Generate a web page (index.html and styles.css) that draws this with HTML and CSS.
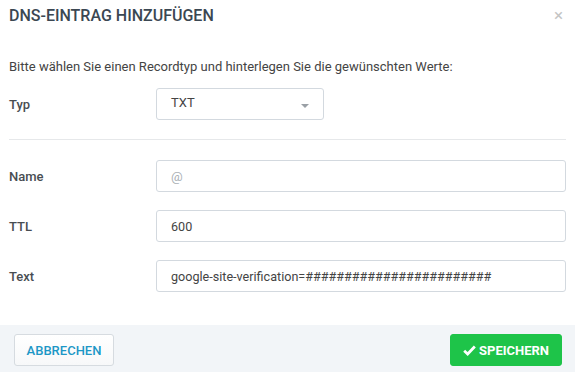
FILE: index.html
```html
<!DOCTYPE html>
<html lang="de">
<head>
<meta charset="utf-8">
<link rel="stylesheet" href="styles.css">
</head>
<body>
<div class="modal">
  <div class="modal-header">
    <h1 class="title">DNS-Eintrag hinzufügen</h1>
    <span class="close">&times;</span>
  </div>
  <div class="modal-body">
    <p class="intro">Bitte wählen Sie einen Recordtyp und hinterlegen Sie die gewünschten Werte:</p>
    <div class="row row-typ">
      <label class="label">Typ</label>
      <div class="select">
        <span>TXT</span>
        <span class="caret"></span>
      </div>
    </div>
    <hr class="divider">
    <div class="row">
      <label class="label">Name</label>
      <div class="input placeholder">@</div>
    </div>
    <div class="row">
      <label class="label">TTL</label>
      <div class="input">600</div>
    </div>
    <div class="row">
      <label class="label">Text</label>
      <div class="input">google-site-verification=########################</div>
    </div>
  </div>
  <div class="modal-footer">
    <button class="btn btn-cancel">Abbrechen</button>
    <button class="btn btn-save"><svg class="check" viewBox="0 0 14 12" width="13" height="11"><path d="M1.2 6.2 L5 9.8 L12.8 1.6" fill="none" stroke="#fff" stroke-width="3" stroke-linejoin="miter"/></svg>Speichern</button>
  </div>
</div>
</body>
</html>
```

FILE: styles.css
```css
* { box-sizing: border-box; }
html, body { margin: 0; padding: 0; background: #fff; }
body {
  font-family: Roboto, "Liberation Sans", Arial, sans-serif;
  font-size: 13px;
  color: #333;
  width: 575px;
  height: 372px;
  overflow: hidden;
}
.modal { width: 575px; height: 372px; display: flex; flex-direction: column; }
.modal-header {
  display: flex;
  justify-content: space-between;
  align-items: flex-start;
  padding: 6px 9px 0 9px;
  height: 45px;
}
.title {
  margin: 0;
  font-size: 16px;
  line-height: 20px;
  font-weight: 500;
  text-transform: uppercase;
  color: #3b4752;
  letter-spacing: 0;
}
.close {
  font-size: 17px;
  line-height: 16px;
  color: #c4c4c4;
  margin-right: 3px;
  margin-top: 1px;
}
.modal-body { padding: 0 9px; flex: 1; }
.intro {
  margin: 13px 0 0 0;
  line-height: 18px;
  color: #444;
}
.row {
  display: flex;
  align-items: center;
  height: 32px;
  margin-bottom: 18px;
}
.row-typ { margin-top: 12px; margin-bottom: 0; }
.label {
  width: 147px;
  flex: none;
  font-weight: 500;
  color: #484d52;
}
.select {
  width: 168px;
  height: 32px;
  border: 1px solid #d3d9df;
  border-radius: 3px;
  display: flex;
  align-items: center;
  justify-content: space-between;
  padding: 0 14px 0 14px;
  color: #444;
  font-size: 13px;
}
.select span:first-child { margin-top: -3px; }
.caret {
  width: 0; height: 0;
  border-left: 4px solid transparent;
  border-right: 4px solid transparent;
  border-top: 4px solid #9aa0a6;
  margin-top: 3px;
}
.divider {
  border: 0;
  border-top: 1px solid #e6e8ea;
  margin: 19px 0 20px 0;
}
.input {
  flex: 1;
  height: 32px;
  border: 1px solid #d3d9df;
  border-radius: 3px;
  display: flex;
  align-items: center;
  padding: 0 14px;
  color: #444;
  font-size: 12.6px;
}
.placeholder { color: #aab0b5; font-size: 13px; }
.modal-footer {
  background: #f2f5f8;
  height: 47px;
  padding: 9px 13px 6px 14px;
  display: flex;
  justify-content: space-between;
  align-items: flex-start;
}
.btn {
  height: 32px;
  border-radius: 3px;
  font-family: Roboto, "Liberation Sans", Arial, sans-serif;
  font-size: 13px;
  font-weight: 500;
  text-transform: uppercase;
  display: flex;
  align-items: center;
  justify-content: center;
  cursor: pointer;
}
.btn-cancel {
  width: 100px;
  background: linear-gradient(#ffffff, #f7f8f9);
  border: 1px solid #d6dbe0;
  color: #1c97c6;
}
.btn-save {
  width: 112px;
  background: #1ec449;
  border: 1px solid #1ec449;
  color: #fff;
  font-weight: 700;
}
.check { margin-right: 3px; }
```
